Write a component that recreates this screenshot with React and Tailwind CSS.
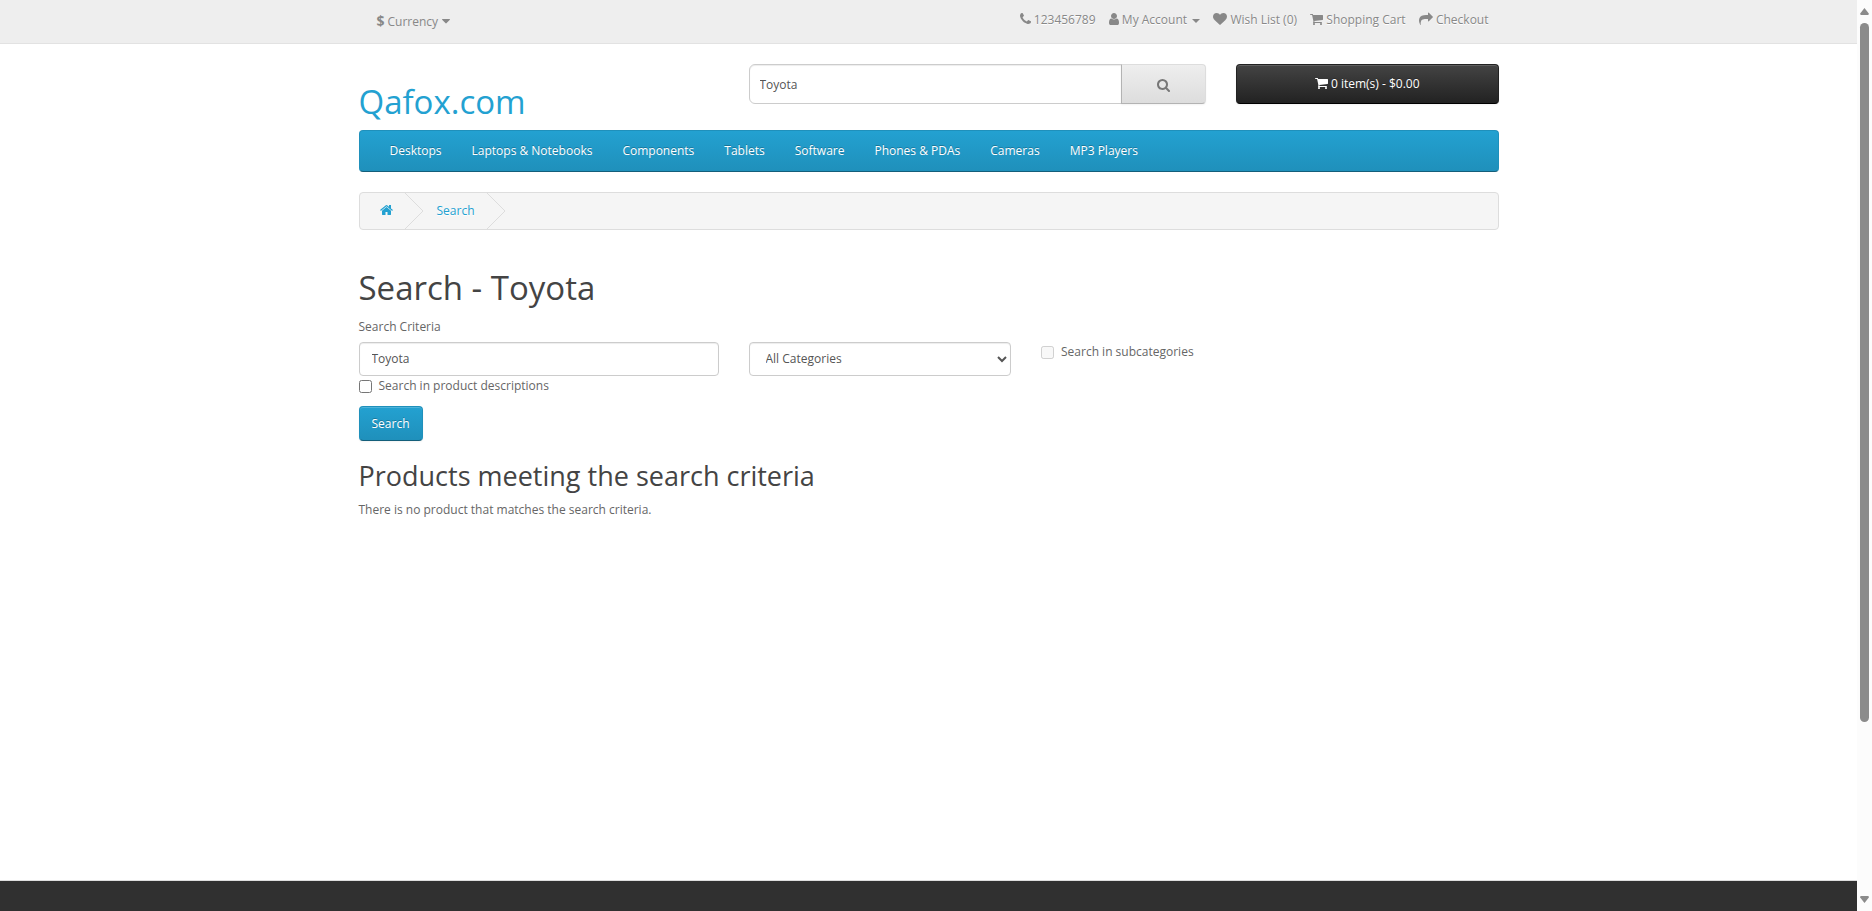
import React from 'react';

const ICONS = {
  phone: [1408, 'M1600 1240q0 27-10 70.5t-21 68.5q-21 50-122 106-94 51-186 51-27 0-53-3.5t-57.5-12.5-47-14.5-55.5-20.5-49-18q-98-35-175-83-127-79-264-216t-216-264q-48-77-83-175-3-9-18-49t-20.5-55.5-14.5-47-12.5-57.5-3.5-53q0-92 51-186 56-101 106-122 25-11 68.5-21t70.5-10q14 0 21 3 18 6 53 76 11 19 30 54t35 63.5 31 53.5q3 4 17.5 25t21.5 35.5 7 28.5q0 20-28.5 50t-62 55-62 53-28.5 46q0 9 5 22.5t8.5 20.5 14 24 11.5 19q76 137 174 235t235 174q2 1 19 11.5t24 14 20.5 8.5 22.5 5q18 0 46-28.5t53-62 55-62 50-28.5q14 0 28.5 7t35.5 21.5 25 17.5q25 15 53.5 31t63.5 35 54 30q70 35 76 53 3 7 3 21z'],
  user: [1280, 'M1536 1399q0 109-62.5 187t-150.5 78h-854q-88 0-150.5-78t-62.5-187q0-85 8.5-160.5t31.5-152 58.5-131 94-89 134.5-34.5q131 128 313 128t313-128q76 0 134.5 34.5t94 89 58.5 131 31.5 152 8.5 160.5zm-256-887q0 159-112.5 271.5t-271.5 112.5-271.5-112.5-112.5-271.5 112.5-271.5 271.5-112.5 271.5 112.5 112.5 271.5z'],
  heart: [1792, 'M896 1664q-26 0-44-18l-624-602q-10-8-27.5-26t-55.5-65.5-68-97.5-53.5-121-23.5-138q0-220 127-344t351-124q62 0 126.5 21.5t120 58 95.5 68.5 76 68q36-36 76-68t95.5-68.5 120-58 126.5-21.5q224 0 351 124t127 344q0 221-229 450l-623 600q-18 18-44 18z'],
  cart: [1664, 'M704 1536q0 52-38 90t-90 38-90-38-38-90 38-90 90-38 90 38 38 90zm896 0q0 52-38 90t-90 38-90-38-38-90 38-90 90-38 90 38 38 90zm128-1088v512q0 24-16.5 42.5t-40.5 21.5l-1044 122q13 60 13 70 0 16-24 64h920q26 0 45 19t19 45-19 45-45 19h-1024q-26 0-45-19t-19-45q0-11 8-31.5t16-36 21.5-40 15.5-29.5l-177-823h-204q-26 0-45-19t-19-45 19-45 45-19h256q16 0 28.5 6.5t19.5 15.5 13 24.5 8 26 5.5 29.5 4.5 26h1201q26 0 45 19t19 45z'],
  share: [1792, 'M1792 640q0 26-19 45l-512 512q-19 19-45 19t-45-19-19-45v-256h-224q-98 0-175.5 6t-154 21.5-133 42.5-105.5 69.5-80 101-48.5 138.5-17.5 181q0 55 5 123 0 6 2.5 23.5t2.5 26.5q0 15-8.5 25t-23.5 10q-16 0-28-17-7-9-13-22t-13.5-30-10.5-24q-127-285-127-451 0-199 53-333 162-403 875-403h224v-256q0-26 19-45t45-19 45 19l512 512q19 19 19 45z'],
  home: [1664, 'M1472 992v480q0 26-19 45t-45 19h-384v-384h-256v384h-384q-26 0-45-19t-19-45v-480q0-1 .5-3t.5-3l575-474 575 474q1 2 1 6zm223-69l-62 74q-8 9-21 11h-3q-13 0-21-7l-692-577-692 577q-12 8-24 7-13-2-21-11l-62-74q-8-10-7-23.5t11-21.5l719-599q32-26 76-26t76 26l244 204v-195q0-14 9-23t23-9h192q14 0 23 9t9 23v408l219 182q10 8 11 21.5t-7 23.5z'],
  search: [1664, 'M1216 832q0-185-131.5-316.5t-316.5-131.5-316.5 131.5-131.5 316.5 131.5 316.5 316.5 131.5 316.5-131.5 131.5-316.5zm512 832q0 52-38 90t-90 38q-54 0-90-38l-343-342q-179 124-399 124-143 0-273.5-55.5t-225-150-150-225-55.5-273.5 55.5-273.5 150-225 225-150 273.5-55.5 273.5 55.5 225 150 150 225 55.5 273.5q0 220-124 399l343 343q37 37 37 90z'],
  caret: [1024, 'M1408 704q0 26-19 45l-448 448q-19 19-45 19t-45-19l-448-448q-19-19-19-45t19-45 45-19h896q26 0 45 19t19 45z'],
};

function Icon({ name, className = '' }) {
  const [w, d] = ICONS[name];
  return (
    <svg
      className={`shrink-0 overflow-visible ${className}`}
      width={w / 128}
      height="14"
      viewBox={`${(1792 - w) / 2} 0 ${w} 1792`}
      fill="currentColor"
    >
      <path d={d} />
    </svg>
  );
}

function TopLink({ icon, children }) {
  return (
    <a className="flex items-center gap-[3px] whitespace-nowrap">
      <Icon name={icon} />
      <span className="mt-[2px]">{children}</span>
    </a>
  );
}

function Chevron() {
  return (
    <svg className="shrink-0" width="20" height="36" viewBox="0 0 20 36" fill="none" stroke="#dddddd">
      <path d="M0.5 -0.5 19 18 0.5 36.5" />
    </svg>
  );
}

const MENU = ['Desktops', 'Laptops & Notebooks', 'Components', 'Tablets', 'Software', 'Phones & PDAs', 'Cameras', 'MP3 Players'];

export default function App() {
  return (
    <div className="flex h-[911px] w-[1872px] overflow-hidden bg-white font-['Open_Sans',sans-serif] text-[12px] leading-[20px] text-[#666]">
      <div className="flex w-[1857px] shrink-0 flex-col">
        <nav className="h-[44px] shrink-0 border-b border-[#e2e2e2] bg-[#eee] text-[#888] [text-shadow:0_1px_0_#fff]">
          <div className="mx-auto flex w-[1140px] items-start justify-between">
            <button className="mt-[11px] ml-[18px] flex h-[20px] items-center">
              <strong className="-mt-[1px] text-[14px] leading-[20px]">$</strong>
              <span className="mt-[2px] ml-[3px]">Currency</span>
              <Icon name="caret" className="ml-[4px]" />
            </button>
            <div className="mt-[9px] mr-[10px] flex h-[20px] items-center gap-[13.3px]">
              <TopLink icon="phone">123456789</TopLink>
              <a className="flex items-center whitespace-nowrap">
                <Icon name="user" />
                <span className="mt-[2px] ml-[3px]">My Account</span>
                <span className="mt-[3px] ml-[5px] h-0 w-0 border-x-4 border-t-4 border-x-transparent border-t-[#888]" />
              </a>
              <TopLink icon="heart">Wish List (0)</TopLink>
              <TopLink icon="cart">Shopping Cart</TopLink>
              <TopLink icon="share">Checkout</TopLink>
            </div>
          </div>
        </nav>

        <div className="mx-auto flex w-[1140px] grow flex-col">
          <header className="mt-[20px] flex h-[66px] items-start">
            <h1 className="mt-[20px] w-[390px] text-[33px] leading-[36px] text-[#23a1d1]">Qafox.com</h1>
            <div className="flex h-[40px] w-[457.5px]">
              <input
                defaultValue="Toyota"
                className="h-[40px] min-w-0 grow rounded-l-[6px] border border-[#ccc] bg-white px-[10px] text-[12px] leading-[20px] text-[#555] shadow-[inset_0_1px_1px_rgba(0,0,0,0.075)] outline-none"
              />
              <button className="-ml-px flex h-[40px] w-[85px] items-center justify-center rounded-r-[4px] border border-t-[#ddd] border-r-[#ddd] border-b-[#b3b3b3] border-l-[#b3b3b3] bg-linear-to-b from-[#eee] to-[#ddd] pt-[2px] text-[#777] shadow-[0_1px_2px_rgba(0,0,0,0.05)]">
                <Icon name="search" />
              </button>
            </div>
            <button className="ml-[30px] flex h-[40px] w-[262.5px] items-center justify-center gap-[3px] rounded-[4px] border border-x-[#222] border-t-[#222] border-b-black bg-linear-to-b from-[#444] to-[#222] pb-[2px] text-white shadow-[inset_0_1px_0_rgba(255,255,255,0.15),0_1px_2px_rgba(0,0,0,0.05)] [text-shadow:0_-1px_0_rgba(0,0,0,0.25)]">
              <Icon name="cart" />
              <span className="mt-[2px]">0 item(s) - $0.00</span>
            </button>
          </header>

          <nav className="flex h-[42px] shrink-0 items-center rounded-[4px] border border-x-[#1f90bb] border-t-[#1f90bb] border-b-[#145e7a] bg-linear-to-b from-[#23a1d1] to-[#1f90bb] pl-[15px] text-white [text-shadow:0_-1px_0_rgba(0,0,0,0.25)]">
            {MENU.map((m) => (
              <a key={m} className="px-[15px] whitespace-nowrap">{m}</a>
            ))}
          </nav>

          <ul className="mt-[20px] flex h-[38px] shrink-0 items-center overflow-hidden rounded-[4px] border border-[#ddd] bg-[#f5f5f5] text-[#23a1d1] [text-shadow:0_1px_0_#fff]">
            <li className="flex items-center">
              <span className="flex w-[44px] pb-[3px] pl-[20px]"><Icon name="home" /></span>
              <Chevron />
            </li>
            <li className="flex items-center">
              <span className="w-[62px] pl-[13px]">Search</span>
              <Chevron />
            </li>
          </ul>

          <main className="mt-[40px]">
            <h1 className="text-[33px] leading-[36px] text-[#444]">Search - Toyota</h1>
            <label className="mt-[11px] block">Search Criteria</label>
            <div className="mt-[5px] flex items-start">
              <input
                defaultValue="Toyota"
                className="h-[34px] w-[360px] rounded-[4px] border border-[#ccc] bg-white px-[12px] pb-[2px] text-[12px] leading-[18px] text-[#555] shadow-[inset_0_1px_1px_rgba(0,0,0,0.075)] outline-none"
              />
              <select className="ml-[30px] h-[34px] w-[262.5px] rounded-[4px] border border-[#ccc] bg-white px-[12px] pb-[2px] text-[12px] text-[#555] shadow-[inset_0_1px_1px_rgba(0,0,0,0.075)]">
                <option>All Categories</option>
              </select>
              <label className="ml-[30px] flex items-center gap-[7px]">
                <input type="checkbox" disabled className="mt-px h-[13px] w-[13px]" />
                Search in subcategories
              </label>
            </div>
            <label className="flex items-center gap-[7px]">
              <input type="checkbox" className="mt-px h-[13px] w-[13px]" />
              Search in product descriptions
            </label>
            <button className="mt-[10px] flex h-[35px] w-[64px] items-center justify-center rounded-[4px] border border-x-[#1f90bb] border-t-[#1f90bb] border-b-[#145e7a] bg-linear-to-b from-[#23a1d1] to-[#1f90bb] text-white shadow-[inset_0_1px_0_rgba(255,255,255,0.2),0_1px_2px_rgba(0,0,0,0.05)] [text-shadow:0_-1px_0_rgba(0,0,0,0.25)]">
              Search
            </button>
            <h2 className="mt-[20px] text-[27px] leading-[30px] text-[#444]">Products meeting the search criteria</h2>
            <p className="mt-[9px]">There is no product that matches the search criteria.</p>
          </main>
        </div>

        <footer className="h-[31px] shrink-0 border-t border-[#ddd] bg-[#303030]" />
      </div>

      <div className="flex w-[15px] shrink-0 flex-col items-center bg-[#fcfcfc] text-[#8b8b8b]">
        <svg className="mt-[8px]" width="9" height="7" viewBox="0 0 9 7" fill="currentColor"><path d="M4.5 0 8.8 5.6Q9 7 8 7H1Q0 7 .2 5.6z" /></svg>
        <div className="mt-[8px] h-[699px] w-[9px] rounded-full bg-[#8b8b8b]" />
        <svg className="mt-[174px]" width="9" height="7" viewBox="0 0 9 7" fill="currentColor"><path d="M4.5 7 8.8 1.4Q9 0 8 0H1Q0 0 .2 1.4z" /></svg>
      </div>
    </div>
  );
}
